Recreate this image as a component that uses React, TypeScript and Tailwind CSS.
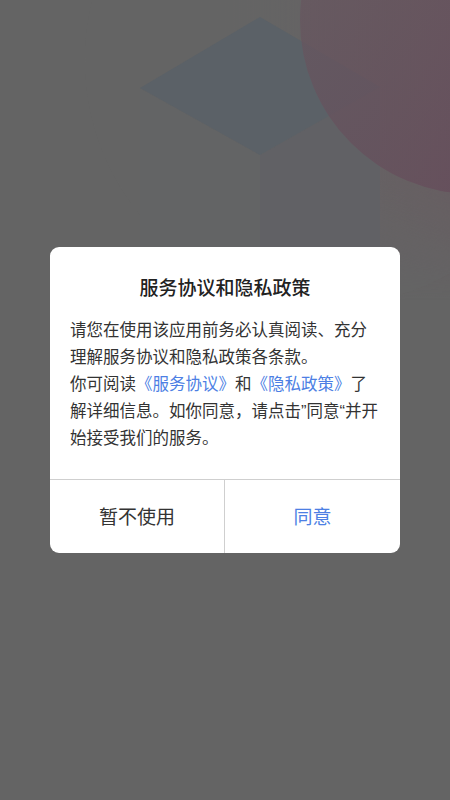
import React from 'react';

const Backdrop: React.FC = () => (
  <svg className="absolute inset-0 h-full w-full" viewBox="0 0 450 800" preserveAspectRatio="none">
    <defs>
      <linearGradient id="pinkFade" x1="0" y1="0" x2="1" y2="1">
        <stop offset="0" stopColor="#675b61" />
        <stop offset="1" stopColor="#654658" />
      </linearGradient>
      <linearGradient id="topWash" x1="0" y1="0" x2="1" y2="0">
        <stop offset="0.4" stopColor="#666666" stopOpacity="0" />
        <stop offset="1" stopColor="#675a60" stopOpacity="1" />
      </linearGradient>
      <linearGradient id="washFade" x1="0" y1="0" x2="0" y2="1">
        <stop offset="0.6" stopColor="#fff" />
        <stop offset="1" stopColor="#000" />
      </linearGradient>
      <mask id="washMask">
        <rect x="0" y="0" width="450" height="300" fill="url(#washFade)" />
      </mask>
    </defs>
    <rect x="0" y="0" width="450" height="300" fill="url(#topWash)" mask="url(#washMask)" />
    {/* faint large circle on the left */}
    <circle cx="330" cy="60" r="245" fill="#686868" opacity="0.3" />
    {/* cube */}
    <polygon points="140,88 260,155 260,250 140,250" fill="#636465" />
    <polygon points="260,155 380,87 380,250 260,250" fill="#616165" />
    <polygon points="260,17 380,87 260,155 140,88" fill="#5b6167" />
    {/* pink circle */}
    <circle cx="474" cy="20" r="174" fill="url(#pinkFade)" opacity="0.75" />
  </svg>
);

const App: React.FC = () => {
  return (
    <div
      className="relative h-[800px] w-[450px] overflow-hidden bg-[#646464]"
      style={{ fontFamily: '"Liberation Sans", "Noto Sans CJK SC", sans-serif' }}
    >
      <Backdrop />

      <div className="relative flex h-full flex-col pt-[247px]">
        <div className="mx-auto w-[350px] overflow-hidden rounded-[9px] bg-white">
          <div className="px-5 pt-[29px] pb-[27px]">
            <h1 className="text-center text-[19px] leading-[26px] font-medium text-[#222]">
              服务协议和隐私政策
            </h1>
            <div className="mt-[15px] whitespace-nowrap text-[16.5px] leading-[27px] text-[#333]">
              <p>
                请您在使用该应用前务必认真阅读、充分
                <br />
                理解服务协议和隐私政策各条款。
              </p>
              <p>
                你可阅读<span className="text-[#4d7fe4]">《服务协议》</span>和<span className="text-[#4d7fe4]">《隐私政策》</span>了
                <br />
                解详细信息。如你同意，请点击”同意“并开
                <br />
                始接受我们的服务。
              </p>
            </div>
          </div>

          <div className="grid h-[74px] grid-cols-2 border-t border-[#cfcfcf]">
            <button className="border-r border-[#cfcfcf] pt-[3px] text-[19px] text-[#333]">暂不使用</button>
            <button className="pt-[3px] text-[19px] text-[#4d7fe4]">同意</button>
          </div>
        </div>
      </div>
    </div>
  );
};

export default App;
